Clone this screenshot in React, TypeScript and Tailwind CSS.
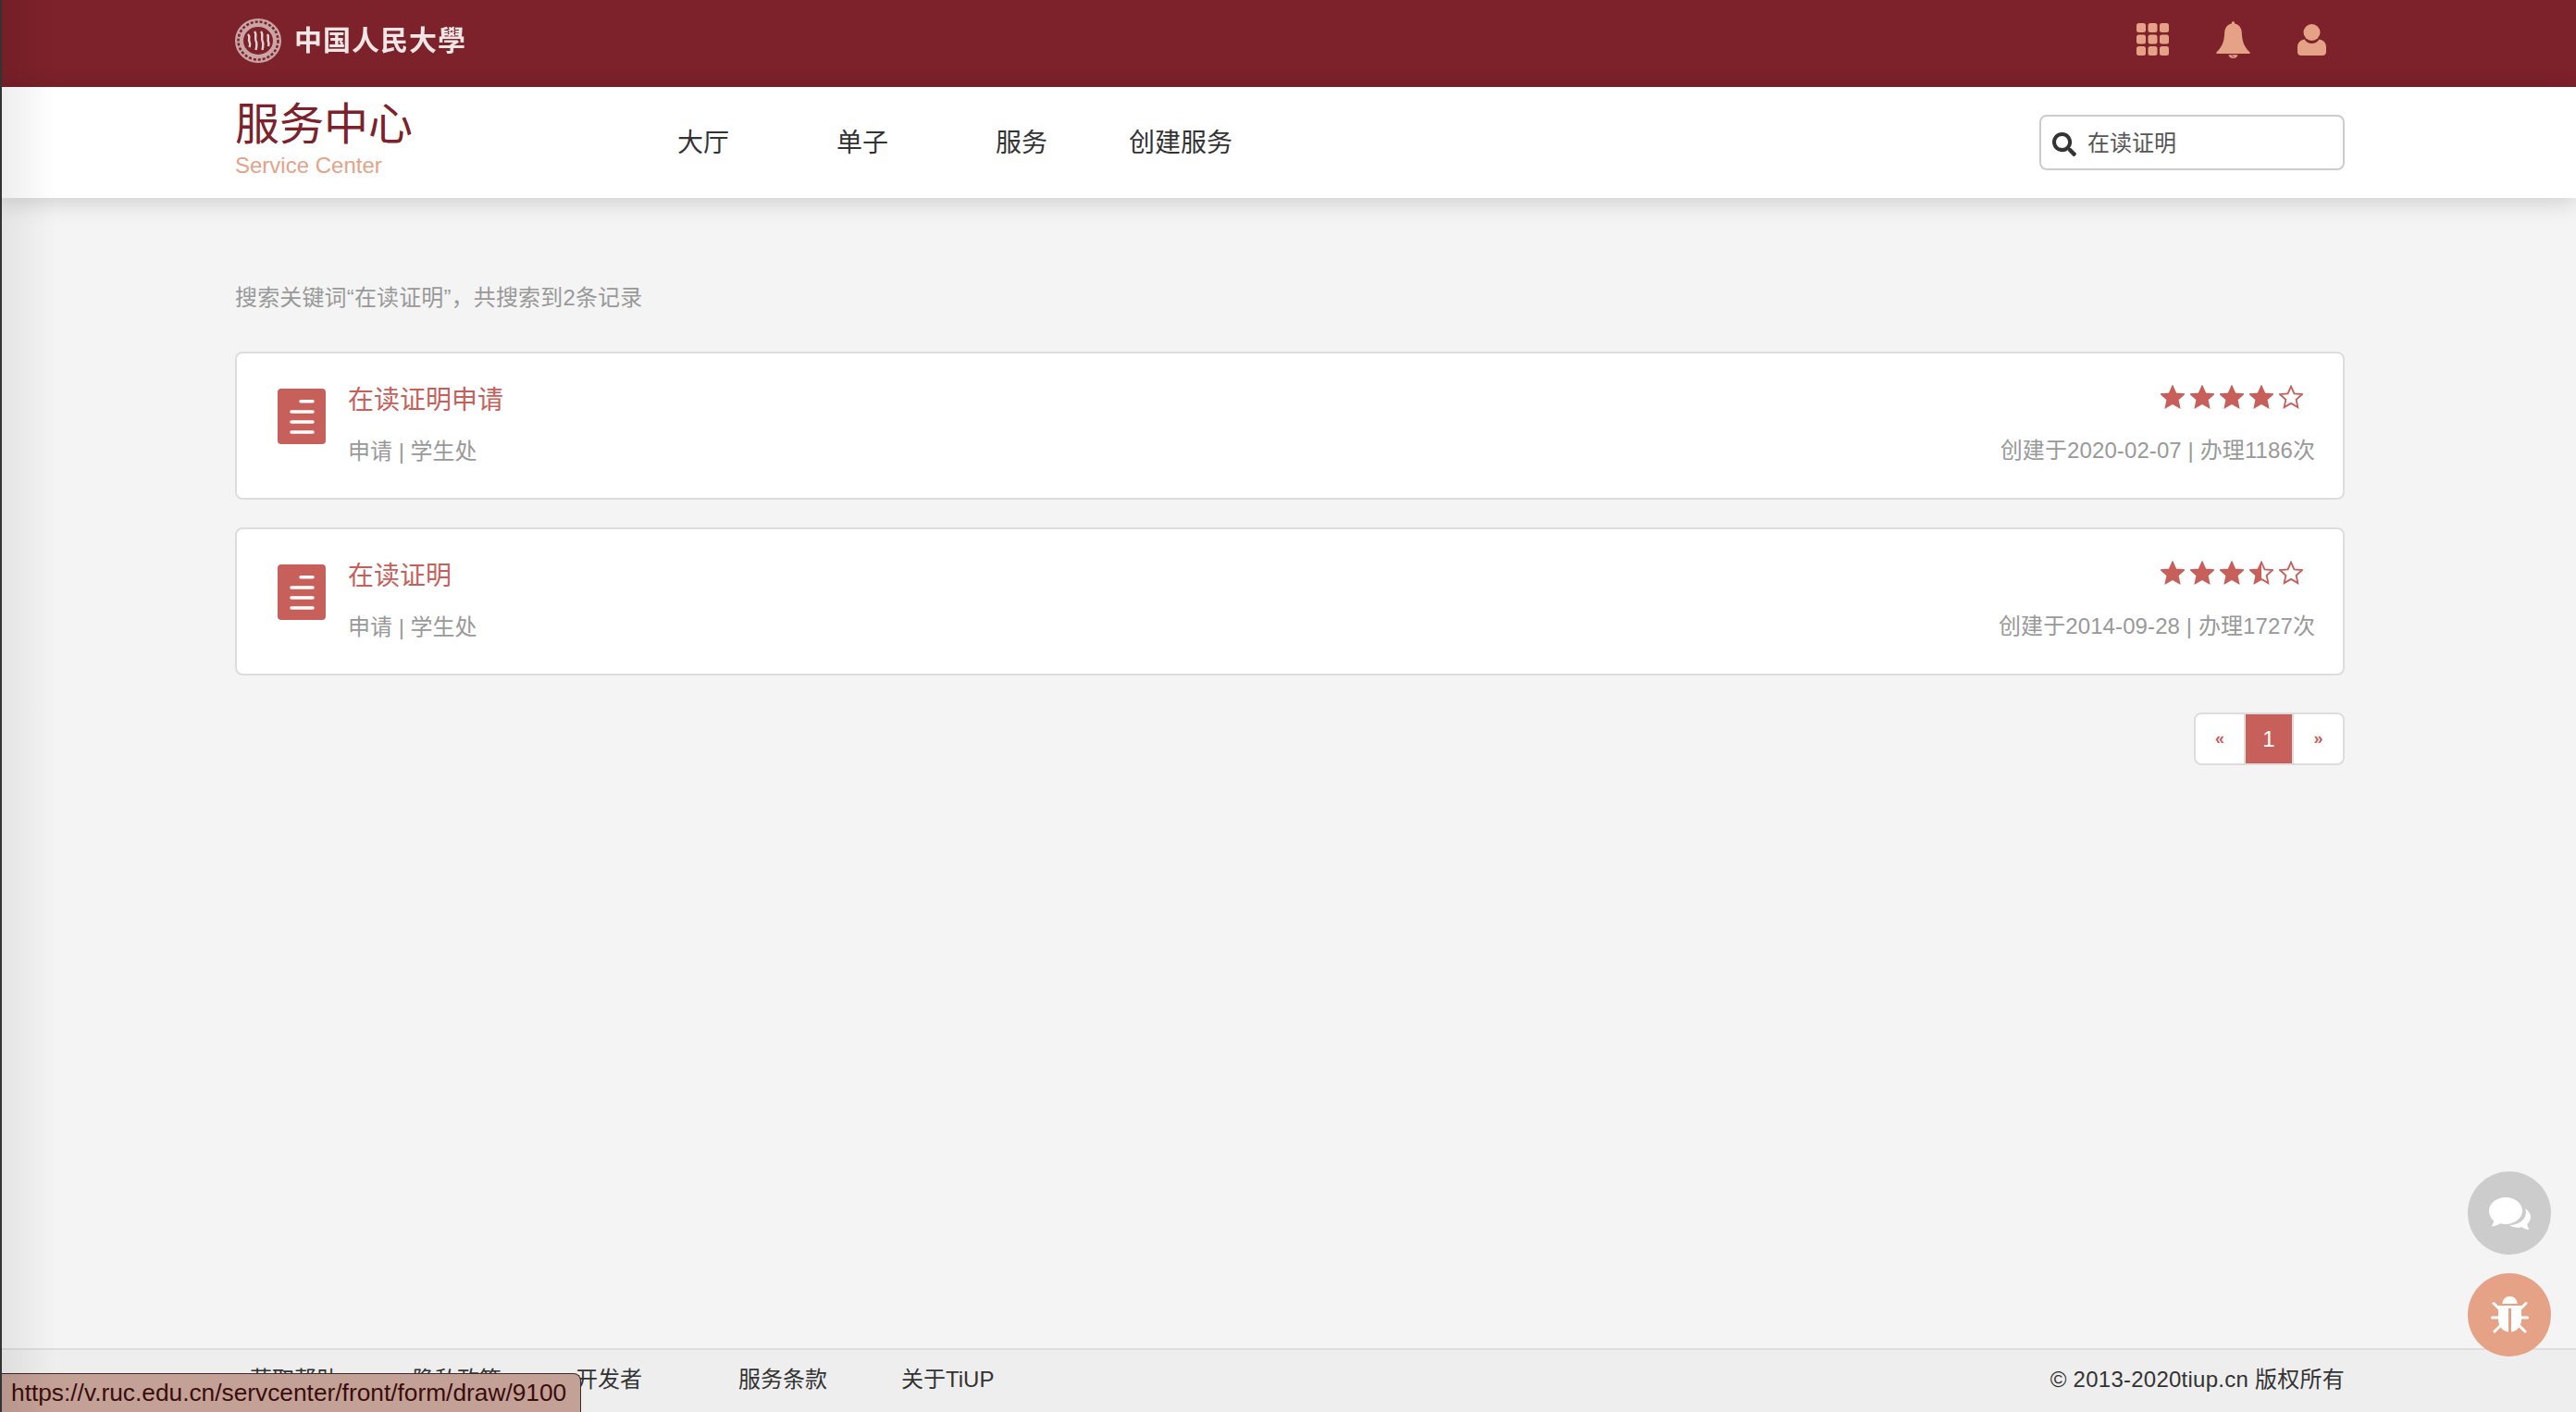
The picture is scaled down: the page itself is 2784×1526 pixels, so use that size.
import { FaSearch } from 'react-icons/fa'

const cjk = "font-['Liberation_Sans','Noto_Sans_CJK_SC',sans-serif]"

const services = [
  { title: '在读证明申请', rating: [1, 1, 1, 1, 0], meta: '创建于2020-02-07 | 办理1186次' },
  { title: '在读证明', rating: [1, 1, 1, 0.5, 0], meta: '创建于2014-09-28 | 办理1727次' }
]

const footerLinks = ['获取帮助', '隐私政策', '开发者', '服务条款', '关于TiUP']
const navLinks = ['大厅', '单子', '服务', '创建服务']
const starPoints = '12,1.5 15.2,8.6 23,9.4 17.2,14.6 18.8,22.3 12,18.4 5.2,22.3 6.8,14.6 1,9.4 8.8,8.6'

function Seal () {
  return (
    <svg className="w-[50px] h-[48px] shrink-0" viewBox="0 0 50 48" fill="none">
      <ellipse cx="25" cy="24" rx="25" ry="24" fill="#c9a5a6" />
      <ellipse cx="25" cy="24" rx="21.500" ry="20.500" stroke="#7d212a" strokeWidth="2.500" strokeDasharray="3 2" />
      <ellipse cx="25" cy="24" rx="16" ry="15" fill="#7d212a" />
      <path d="M14 17c3 3 0 5 1.500 8s1 4 0 6M21 14c3 3 0 7 1.500 10s1 6 0 10M28 14c3 3 0 7 1.500 10s1 6 0 10M35 17c2 3 0 5 1 8s.5 3 0 5" stroke="#e2d2d2" strokeWidth="2.400" />
    </svg>
  )
}

function GridIcon () {
  return (
    <svg className="w-[35px] h-[35px]" viewBox="0 0 35 35" fill="#e5a287">
      {[0, 12.5, 25].map(y => [0, 12.5, 25].map(x => (
        <rect key={`${x}-${y}`} x={x} y={y} width="10" height="10" rx="2.500" />
      )))}
    </svg>
  )
}

function BellIcon () {
  return (
    <svg className="w-[37px] h-[40px]" viewBox="0 0 37 40" fill="#e5a287">
      <path d="M18.500 0c1 0 1.600.9 1.700 2.400 4.800 1 7.300 4.600 7.600 9.600.4 8 1.400 14.600 8.700 21.500.6.600.3 1.600-.7 1.600H1.200c-1 0-1.300-1-.7-1.600C7.800 26.600 8.800 20 9.200 12c.3-5 2.800-8.600 7.600-9.600C16.900.9 17.500 0 18.500 0z" />
      <path d="M13.500 36.300h10c-.3 2.100-2.500 3.700-5 3.700s-4.700-1.600-5-3.700z" />
      <path d="M17 36.500c0 1.200 1 2 2.500 2" fill="none" stroke="#7d212a" strokeWidth="0.800" />
    </svg>
  )
}

function UserIcon () {
  return (
    <svg className="w-[31px] h-[34px]" viewBox="0 0 31 34" fill="#e5a287">
      <ellipse cx="15.500" cy="9" rx="9" ry="9" />
      <path d="M7.500 16.500c2 3 4.800 4.500 8 4.500s6-1.500 8-4.500c4.500 1 7.500 3.500 7.500 8.500v5c0 2.500-1.500 4-4 4H4c-2.500 0-4-1.500-4-4v-5c0-5 3-7.500 7.500-8.500z" />
    </svg>
  )
}

function DocIcon () {
  return (
    <svg className="w-[52px] h-[60px] shrink-0" viewBox="0 0 52 60">
      <rect width="52" height="60" rx="4" fill="#c75f5b" />
      <g stroke="#fff" strokeWidth="3.500" strokeLinecap="round">
        <path d="M25 13.700h13M15 25h23M15 36h23M15 47h23" />
      </g>
    </svg>
  )
}

function Star ({ value, id }: { value: number, id: string }) {
  return (
    <svg className="w-[26px] h-[26px]" viewBox="0 0 24 24">
      <defs>
        <clipPath id={id}>
          <rect x="0" y="0" width="12" height="24" />
        </clipPath>
      </defs>
      <polygon points={starPoints} fill={value === 1 ? '#c75f5b' : 'none'} stroke="#c75f5b" strokeWidth="1.700" />
      {value === 0.5 && <polygon points={starPoints} fill="#c75f5b" clipPath={`url(#${id})`} />}
    </svg>
  )
}

function ChatIcon () {
  return (
    <svg className="w-[45px] h-[35px]" viewBox="0 0 45 35" fill="#fff">
      <path d="M18 0c9.900 0 18 6.500 18 14.500S27.900 29 18 29c-2 0-4-.3-6-.8-2.500 1.800-6 2.900-9.500 3.300 1.300-1.800 2.300-4 2.600-6.100C2 23 0 19 0 14.500 0 6.500 8.100 0 18 0z" />
      <path d="M39 12c3.800 2.500 6 5.500 6 9 0 3.200-1.400 5.800-3.700 7.800.2 2 .9 4.200 2.200 6.200-3.300-.3-6-1.300-8.100-2.800-1.200.3-2.600.5-4 .5-3.500 0-7-1-9.400-2.700 11-.2 18-6.500 18-14 0-1.400-.4-2.800-1-4z" />
    </svg>
  )
}

function BugIcon () {
  return (
    <svg className="w-[41px] h-[40px]" viewBox="0 0 41 40" fill="#fff">
      <path d="M12.500 8C12.500 3.500 16 0 20.500 0s8 3.500 8 8z" />
      <path d="M8 10h25v15c0 7.500-5 13.500-12.500 13.500S8 32.500 8 25z" />
      <rect x="19" y="13" width="3" height="26" fill="#e5a287" />
      <g stroke="#fff" strokeWidth="3" strokeLinecap="round">
        <path d="M3 7.500l7 7M38 7.500l-7 7M1.500 23h7M39.500 23h-7M4 38l7-7M37 38l-7-7" />
      </g>
    </svg>
  )
}

export default function App () {
  return (
    <div className={`${cjk} relative h-[1526px] w-[2784px] overflow-hidden bg-[#f4f4f4] flex flex-col`}>
      <header className="h-[94px] shrink-0 bg-[#7d212a] pl-[254px] pr-[250px] flex items-center justify-between">
        <div className="flex items-center gap-[14px] pb-[6px]">
          <Seal />
          <span className="text-[30px] leading-none font-bold tracking-[1px] text-[#f0e6e6] blur-[0.6px]">中国人民大學</span>
        </div>
        <div className="flex items-center gap-[51px] pr-[20px] pb-[9px]">
          <GridIcon />
          <BellIcon />
          <UserIcon />
        </div>
      </header>

      <nav className="h-[120px] shrink-0 bg-white px-[250px] shadow-[0_4px_24px_rgba(0,0,0,0.16)] z-10 flex items-center">
        <div className="w-[424px] pl-1 flex flex-col">
          <span className="text-[48px] leading-[56px] text-[#7d212a] mt-[-7px]">服务中心</span>
          <span className="text-[24px] leading-[30px] mt-[1px] text-[#e5a287]">Service Center</span>
        </div>
        <ul className="flex pt-[1px]">
          {navLinks.map(link => (
            <li key={link} className="w-[172px] text-center text-[28px] text-[#333]">{link}</li>
          ))}
        </ul>
        <div className="ml-auto w-[330px] h-[60px] border-2 border-[#ccc] rounded-lg flex items-center pl-3 gap-3">
          <FaSearch className="w-[26px] h-[26px] mt-1 text-[#333]" />
          <span className="text-[24px] text-[#555] mt-[1px]">在读证明</span>
        </div>
      </nav>

      <main className="flex-1 pl-[254px] pr-[250px] pt-[94px]">
        <p className="text-[24px] leading-[28px] text-[#999] tracking-[0.15px]">搜索关键词“在读证明”，共搜索到2条记录</p>
        <div className="mt-[44px] flex flex-col gap-[30px]">
          {services.map((s, i) => (
            <section key={s.title} className="h-[160px] bg-white border-2 border-[#ddd] rounded-lg pl-[44px] pr-[30px] flex">
              <div className="pt-[38px]"><DocIcon /></div>
              <div className="ml-6 pt-[25px]">
                <h3 className="text-[28px] leading-[52px] text-[#c75f5b]">{s.title}</h3>
                <p className="mt-[5px] text-[24px] leading-[48px] text-[#999]">申请 | 学生处</p>
              </div>
              <div className="ml-auto pt-[21px] flex flex-col items-end">
                <div className="h-[52px] pr-[13px] flex items-center gap-[6px]">
                  {s.rating.map((v, j) => <Star key={j} value={v} id={`half-${i}-${j}`} />)}
                </div>
                <p className="mt-[8px] text-[24px] leading-[48px] text-[#999] tracking-[0.1px]">{s.meta}</p>
              </div>
            </section>
          ))}
        </div>
        <div className="mt-[40px] flex justify-end">
          <div className="flex h-[57px] border-2 border-[#ddd] rounded-lg bg-white overflow-hidden text-[#c75f5b]">
            <span className="w-[52px] flex items-center justify-center text-[18px] font-bold">«</span>
            <span className="w-[54px] border-x-2 border-[#ddd] bg-[#c75f5b] text-white flex items-center justify-center text-[24px]">1</span>
            <span className="w-[53px] flex items-center justify-center text-[18px] font-bold">»</span>
          </div>
        </div>
      </main>

      <footer className="h-[69px] shrink-0 bg-[#eee] border-t-2 border-[#ddd] pl-[270px] pr-[250px] pb-[4px] flex items-center justify-between text-[24px] text-[#333]">
        <ul className="flex">
          {footerLinks.map(link => <li key={link} className="w-[176px]">{link}</li>)}
        </ul>
        <span className="tracking-[0.25px]">© 2013-2020tiup.cn 版权所有</span>
      </footer>

      <div className="absolute left-[2667px] top-[1266px] w-[90px] h-[90px] rounded-full bg-[#ccc] flex items-center justify-center"><ChatIcon /></div>
      <div className="absolute left-[2667px] top-[1376px] w-[90px] h-[90px] rounded-full bg-[#e5a287] flex items-center justify-center"><BugIcon /></div>

      <div className="absolute left-0 bottom-0 h-[42px] w-[628px] pl-[12px] bg-[#c4a197] border-t border-r border-[#3a2a28] rounded-tr-lg flex items-center text-[26.3px] text-[#3a0d0d] whitespace-nowrap">
        https://v.ruc.edu.cn/servcenter/front/form/draw/9100
      </div>

      <div className="absolute inset-y-0 left-0 w-[60px] bg-gradient-to-r from-black/[0.07] to-transparent pointer-events-none z-20" />
      <div className="absolute inset-y-0 left-0 w-[2px] bg-[#333] z-20" />
    </div>
  )
}
